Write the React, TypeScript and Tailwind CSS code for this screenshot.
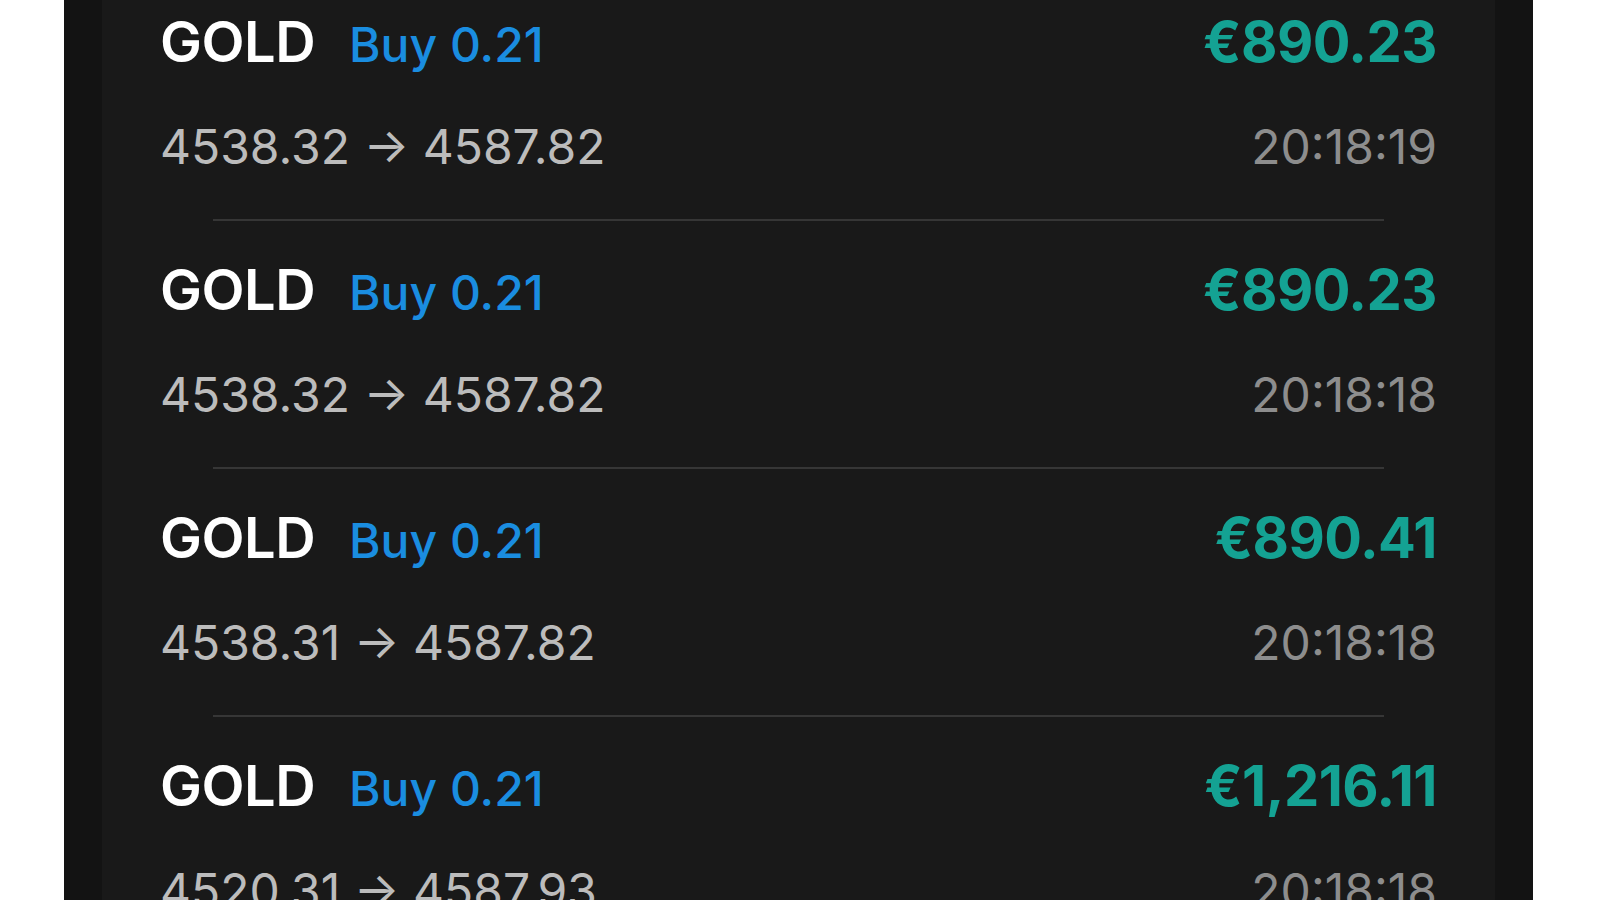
import React from 'react'

type Trade = {
  symbol: string
  side: string
  open: string
  close: string
  profit: string
  time: string
}

const trades: Trade[] = [
  { symbol: 'GOLD', side: 'Buy 0.21', open: '4538.32', close: '4587.82', profit: '€890.23', time: '20:18:19' },
  { symbol: 'GOLD', side: 'Buy 0.21', open: '4538.32', close: '4587.82', profit: '€890.23', time: '20:18:18' },
  { symbol: 'GOLD', side: 'Buy 0.21', open: '4538.31', close: '4587.82', profit: '€890.41', time: '20:18:18' },
  { symbol: 'GOLD', side: 'Buy 0.21', open: '4520.31', close: '4587.93', profit: '€1,216.11', time: '20:18:18' },
]

function TradeRow({ trade, last }: { trade: Trade; last: boolean }) {
  return (
    <div className="flex flex-col">
      <div className="flex flex-col px-[58px] pt-[41px] pb-[48px]">
        {/* symbol / side / profit */}
        <div className="flex h-[56px] items-baseline justify-between leading-[56px]">
          <div className="flex items-baseline gap-[34px]">
            <span className="text-[56px] font-semibold tracking-[-0.5px] text-white">{trade.symbol}</span>
            <span className="text-[48px] font-medium text-[#1a8de0]">{trade.side}</span>
          </div>
          <span className="text-[56px] font-bold tracking-[-0.5px] text-[#14a293]">{trade.profit}</span>
        </div>
        {/* prices / time */}
        <div className="mt-[53px] flex h-[48px] items-baseline justify-between text-[48px] leading-[48px]">
          <span className="text-[#bcbcbc]">
            {trade.open} → {trade.close}
          </span>
          <span className="text-[#8d8d8d]">{trade.time}</span>
        </div>
      </div>
      {!last && <div className="mx-[111px] h-[2px] bg-[#363636]" />}
    </div>
  )
}

export default function App() {
  return (
    <div
      className="flex h-[900px] w-full overflow-hidden bg-white"
      style={{ fontFamily: 'Inter, "Noto Sans", sans-serif' }}
    >
      <div className="ml-[64px] flex h-full w-[1469px] bg-[#131313] px-[38px]">
        <div className="h-full w-full overflow-hidden bg-[#191919]">
          <div className="-mt-[27px] flex flex-col">
            {trades.map((t, i) => (
              <TradeRow key={i} trade={t} last={i === trades.length - 1} />
            ))}
          </div>
        </div>
      </div>
    </div>
  )
}
